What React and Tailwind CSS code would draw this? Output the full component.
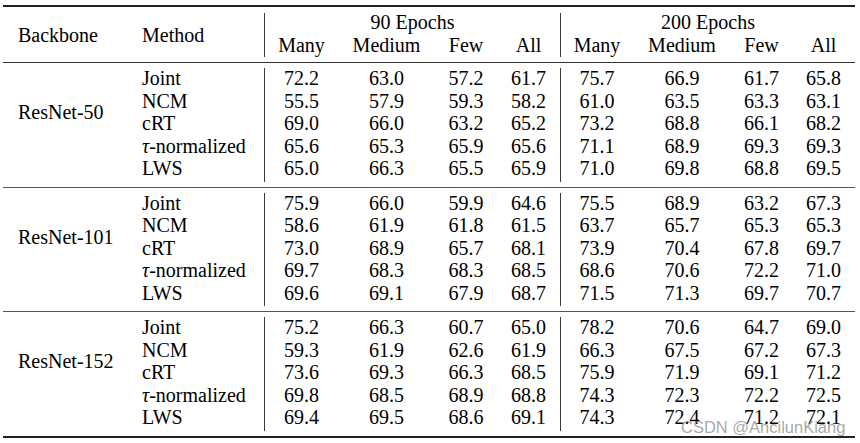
const groups = [
  {
    backbone: 'ResNet-50',
    rows: [
      ['Joint', ['72.2', '63.0', '57.2', '61.7'], ['75.7', '66.9', '61.7', '65.8']],
      ['NCM', ['55.5', '57.9', '59.3', '58.2'], ['61.0', '63.5', '63.3', '63.1']],
      ['cRT', ['69.0', '66.0', '63.2', '65.2'], ['73.2', '68.8', '66.1', '68.2']],
      ['tau', ['65.6', '65.3', '65.9', '65.6'], ['71.1', '68.9', '69.3', '69.3']],
      ['LWS', ['65.0', '66.3', '65.5', '65.9'], ['71.0', '69.8', '68.8', '69.5']],
    ],
  },
  {
    backbone: 'ResNet-101',
    rows: [
      ['Joint', ['75.9', '66.0', '59.9', '64.6'], ['75.5', '68.9', '63.2', '67.3']],
      ['NCM', ['58.6', '61.9', '61.8', '61.5'], ['63.7', '65.7', '65.3', '65.3']],
      ['cRT', ['73.0', '68.9', '65.7', '68.1'], ['73.9', '70.4', '67.8', '69.7']],
      ['tau', ['69.7', '68.3', '68.3', '68.5'], ['68.6', '70.6', '72.2', '71.0']],
      ['LWS', ['69.6', '69.1', '67.9', '68.7'], ['71.5', '71.3', '69.7', '70.7']],
    ],
  },
  {
    backbone: 'ResNet-152',
    rows: [
      ['Joint', ['75.2', '66.3', '60.7', '65.0'], ['78.2', '70.6', '64.7', '69.0']],
      ['NCM', ['59.3', '61.9', '62.6', '61.9'], ['66.3', '67.5', '67.2', '67.3']],
      ['cRT', ['73.6', '69.3', '66.3', '68.5'], ['75.9', '71.9', '69.1', '71.2']],
      ['tau', ['69.8', '68.5', '68.9', '68.8'], ['74.3', '72.3', '72.2', '72.5']],
      ['LWS', ['69.4', '69.5', '68.6', '69.1'], ['74.3', '72.4', '71.2', '72.1']],
    ],
  },
]

const cols90 = 'grid grid-cols-[73px_97px_62px_63px] content-start text-center'
const cols200 = 'grid grid-cols-[72px_98px_61px_63px] content-start text-center'

function MethodName({ name }) {
  if (name === 'tau') {
    return (
      <>
        <span className="italic">τ</span>-normalized
      </>
    )
  }
  return name
}

function Group({ group }) {
  return (
    <div className="flex h-[123.5px]">
      <div className="flex w-[261px] pt-[4px]">
        <div className="w-[127px] pl-[15px]">
          <div className="mt-[34px]">{group.backbone}</div>
        </div>
        <div className="w-[134px] pl-[12px]">
          {group.rows.map((r) => (
            <div key={r[0]} className="h-[22.5px]">
              <MethodName name={r[0]} />
            </div>
          ))}
        </div>
      </div>
      <div className="w-px bg-[#3a3a3a] mt-[5px] mb-[5px]" />
      <div className={`w-[295px] pt-[4px] ${cols90}`}>
        {group.rows.map((r) => r[1].map((v, i) => <div key={r[0] + i}>{v}</div>))}
      </div>
      <div className="w-px bg-[#3a3a3a] mt-[5px] mb-[5px]" />
      <div className={`w-[294px] pt-[4px] ${cols200}`}>
        {group.rows.map((r) => r[2].map((v, i) => <div key={r[0] + i}>{v}</div>))}
      </div>
    </div>
  )
}

export default function App() {
  return (
    <div className="relative w-[860px] h-[443px] bg-white overflow-hidden pt-[5px] pl-[3px] text-[20px] leading-[22.5px] text-black font-['Liberation_Serif',serif]">
      <div className="w-[852px]">
        {/* top rule */}
        <div className="h-[2px] bg-[#222]" />

        {/* header */}
        <div className="flex h-[55px]">
          <div className="flex w-[261px] items-center pt-[1px]">
            <div className="w-[127px] pl-[15px]">Backbone</div>
            <div className="w-[134px] pl-[12px]">Method</div>
          </div>
          <div className="w-px bg-[#3a3a3a] mt-[6px] mb-[5px]" />
          <div className="w-[295px] pt-[4px]">
            <div className="text-center">90 Epochs</div>
            <div className={cols90}>
              <div>Many</div>
              <div>Medium</div>
              <div>Few</div>
              <div>All</div>
            </div>
          </div>
          <div className="w-px bg-[#3a3a3a] mt-[6px] mb-[5px]" />
          <div className="w-[294px] pt-[4px]">
            <div className="text-center">200 Epochs</div>
            <div className={cols200}>
              <div>Many</div>
              <div>Medium</div>
              <div>Few</div>
              <div>All</div>
            </div>
          </div>
        </div>
        <div className="h-px bg-[#333]" />

        <Group group={groups[0]} />
        <div className="h-px bg-[#555]" />
        <Group group={groups[1]} />
        <div className="h-px bg-[#555]" />
        <Group group={groups[2]} />

        {/* bottom rule */}
        <div className="h-[2px] bg-[#222]" />
      </div>

      {/* watermark */}
      <div className="absolute left-[681px] top-[417px] text-[16.5px] leading-[20px] text-[#8a8a8a]/75 font-['Liberation_Sans',sans-serif]">
        CSDN @AncilunKiang
      </div>
    </div>
  )
}
